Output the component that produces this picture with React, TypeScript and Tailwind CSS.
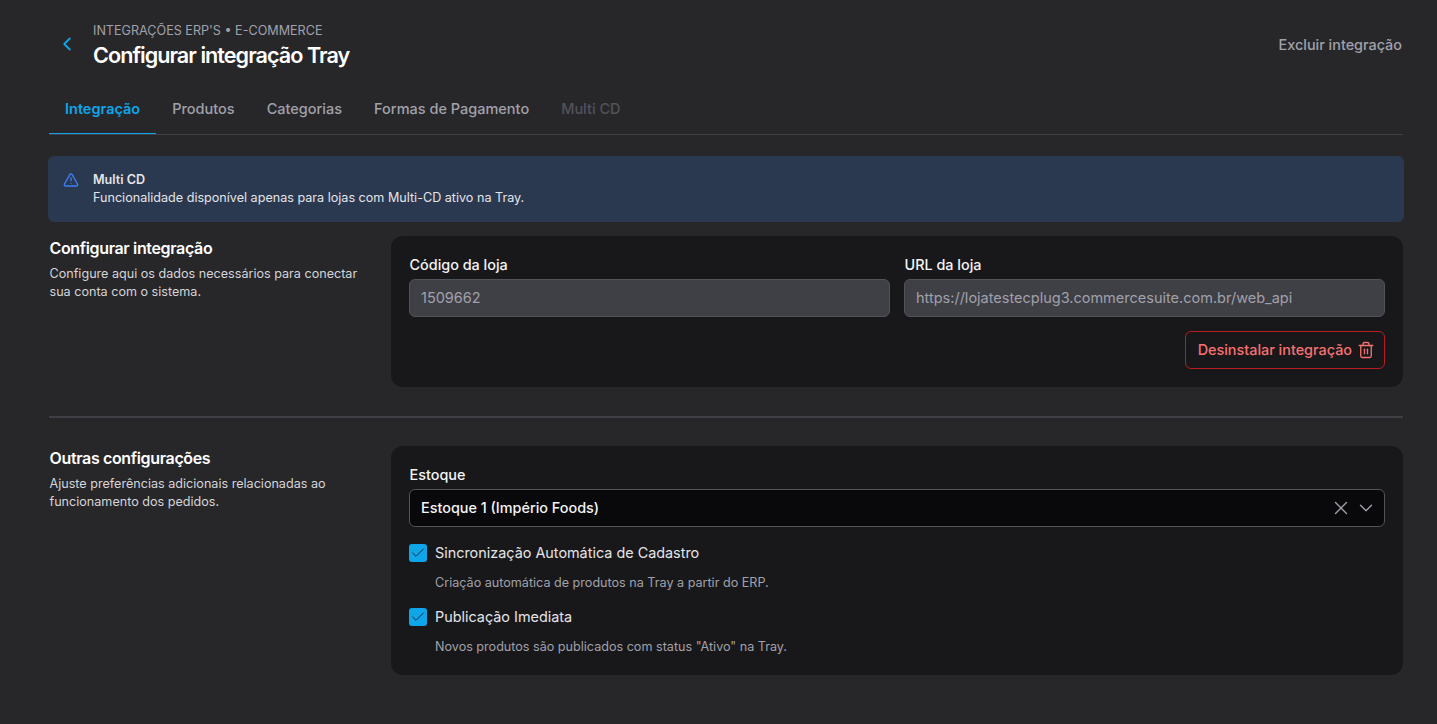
import { AlertTriangle, Check, ChevronDown, ChevronLeft, Trash2, X } from "lucide-react";

const tabs = ["Produtos", "Categorias", "Formas de Pagamento"];

function CheckRow({ label, hint }: { label: string; hint: string }) {
  return (
    <div className="flex flex-col">
      <div className="flex items-center gap-2 h-5">
        <span className="w-[18px] h-[18px] rounded-[3px] bg-[#0ea5e9] flex items-center justify-center">
          <Check className="w-4 h-4 text-[#1e293b]" strokeWidth={1.5} />
        </span>
        <span className="text-[14.4px] text-[#e4e4e7]">{label}</span>
      </div>
      <p className="text-[12.6px] text-[#a1a1aa] pl-[26px] mt-[11px] leading-[18px]">{hint}</p>
    </div>
  );
}

function SectionInfo({ title, text }: { title: string; text: React.ReactNode }) {
  return (
    <div className="w-[342px] shrink-0 pl-[0.5px] pr-6">
      <h2 className="text-base font-semibold text-white leading-6 tracking-[-0.35px]">{title}</h2>
      <p className="text-[12.6px] text-[#d4d4d8] leading-[18px] mt-[5px]">{text}</p>
    </div>
  );
}

export default function App() {
  return (
    <div className="min-h-[724px] bg-[#27272a] pl-[49px] pr-[34px] pt-[20px] font-['Inter',sans-serif]">
      <header className="flex items-center justify-between h-[49px]">
        <div className="flex items-center">
          <ChevronLeft className="w-[22px] h-[22px] text-[#0ea5e9] ml-[7px] mr-[15px] -mt-[2px]" />
          <div>
            <p className="text-[12.6px] text-[#a1a1aa] leading-[20px]">INTEGRAÇÕES ERP'S • E-COMMERCE</p>
            <h1 className="text-[21.6px] font-semibold text-white leading-7 tracking-[-0.96px]">Configurar integração Tray</h1>
          </div>
        </div>
        <button className="text-[14.4px] font-medium text-[#a1a1aa] pr-px">Excluir integração</button>
      </header>

      <nav className="flex mt-[17px] h-[49px] border-b border-[#3f3f46]">
        <a className="px-4 h-[48px] pb-[2px] flex items-center text-[14.5px] font-semibold text-[#0ea5e9] border-b border-[#0ea5e9]">Integração</a>
        {tabs.map((t) => (
          <a key={t} className="px-4 h-[48px] pb-[2px] flex items-center text-[14.5px] font-medium text-[#a1a1aa]">{t}</a>
        ))}
        <a className="px-4 h-[48px] pb-[2px] flex items-center text-[14.5px] font-medium text-[#52525b]">Multi CD</a>
      </nav>

      <div className="-ml-px -mr-px mt-[21px] h-[66px] rounded-md bg-[#2a3850] flex pl-[15px] pt-[15px]">
        <AlertTriangle className="w-4 h-4 text-[#3b82f6] mr-[14px] mt-px" />
        <div className="text-[12.6px] leading-[18px]">
          <p className="font-semibold text-[#e4e4e7]">Multi CD</p>
          <p className="text-[#e4e4e7]">Funcionalidade disponível apenas para lojas com Multi-CD ativo na Tray.</p>
        </div>
      </div>

      <section className="flex mt-[14px]">
        <SectionInfo
          title="Configurar integração"
          text={<>Configure aqui os dados necessários para conectar<br />sua conta com o sistema.</>}
        />
        <div className="flex-1 h-[151px] rounded-xl bg-[#18181b] px-[18px] pt-[19px]">
          <div className="grid grid-cols-2 gap-[14px]">
            <div>
              <label className="block pl-[0.5px] text-[14.4px] font-medium text-[#f4f4f5] leading-5 mb-[4px]">Código da loja</label>
              <div className="h-[38px] rounded-md bg-[#3f3f46] border border-[#52525b] px-[11px] flex items-center text-[14.5px] text-[#a1a1aa]">1509662</div>
            </div>
            <div>
              <label className="block pl-[0.5px] text-[14.4px] font-medium text-[#f4f4f5] leading-5 mb-[4px]">URL da loja</label>
              <div className="h-[38px] rounded-md bg-[#3f3f46] border border-[#52525b] px-[11px] flex items-center text-[14.5px] text-[#a1a1aa]">https://lojatestecplug3.commercesuite.com.br/web_api</div>
            </div>
          </div>
          <div className="flex justify-end mt-[14px]">
            <button className="h-[38px] pl-3 pr-[9px] rounded-md border border-[#b91c1c] flex items-center gap-[5px] text-[14.4px] font-medium text-[#f87171]">
              Desinstalar integração
              <Trash2 className="w-[18px] h-[18px]" strokeWidth={1.75} />
            </button>
          </div>
        </div>
      </section>

      <hr className="mt-[29px] border-t-2 border-[#3f3f46]" />

      <section className="flex mt-[28px]">
        <SectionInfo
          title="Outras configurações"
          text={<>Ajuste preferências adicionais relacionadas ao<br />funcionamento dos pedidos.</>}
        />
        <div className="flex-1 h-[229px] rounded-xl bg-[#18181b] px-[18px] pt-[19px]">
          <label className="block pl-[0.5px] text-[14.4px] font-medium text-[#f4f4f5] leading-5 mb-[4px]">Estoque</label>
          <div className="h-[38px] rounded-md bg-[#09090b] border border-[#52525b] pl-[11px] pr-[7px] flex items-center justify-between text-[14.4px] font-medium text-[#f4f4f5]">
            Estoque 1 (Império Foods)
            <span className="flex items-center gap-[3px] text-[#a1a1aa]">
              <X className="w-[22px] h-[22px]" strokeWidth={1.5} />
              <ChevronDown className="w-[22px] h-[22px]" strokeWidth={1.5} />
            </span>
          </div>
          <div className="mt-[16px] flex flex-col gap-[15px]">
            <CheckRow label="Sincronização Automática de Cadastro" hint="Criação automática de produtos na Tray a partir do ERP." />
            <CheckRow label="Publicação Imediata" hint='Novos produtos são publicados com status "Ativo" na Tray.' />
          </div>
        </div>
      </section>
    </div>
  );
}
